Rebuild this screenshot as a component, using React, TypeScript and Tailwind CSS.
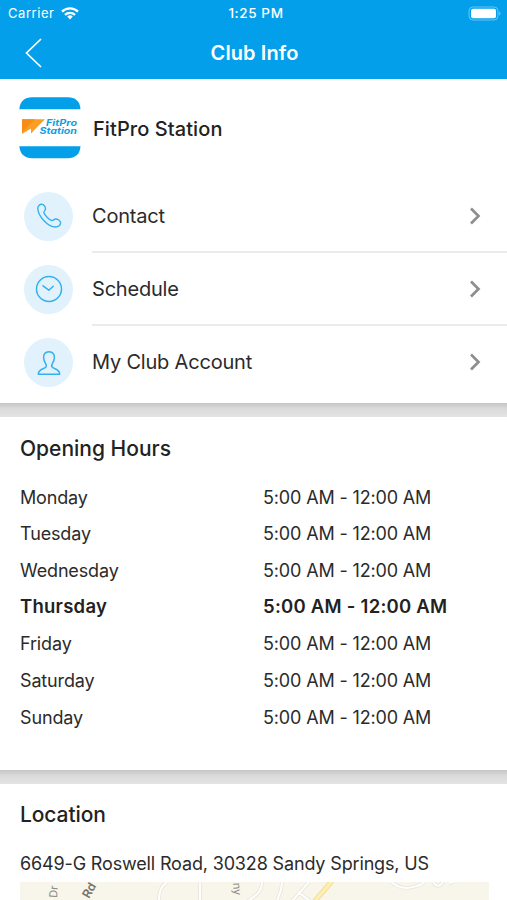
import type { ReactNode } from "react";

const PhoneIcon = () => (
  <svg width="26" height="26" viewBox="0 0 26 26" fill="none" stroke="#35b0ee" strokeWidth="1.4" strokeLinejoin="round">
    <path d="M1.800 5.200C1.800 3 3.700 1.300 5.600 1.300c2.400 0 4 2.600 3.900 4.600C9.400 7.700 7.400 8.300 8 9.900c.9 2.500 4.900 6.400 7.300 7.500 1.700.7 2.600-1.300 4.300-1.400 2-.1 4.800 1.500 5 3.600.2 2.400-2.300 4.400-5.100 4.400C11.800 24 1.800 12.800 1.800 5.200Z" />
  </svg>
);

const ClockIcon = () => (
  <svg width="28" height="28" viewBox="0 0 28 28" fill="none" stroke="#35b0ee" strokeWidth="1.5" strokeLinecap="round" strokeLinejoin="round">
    <circle cx="14" cy="14" r="12.500" />
    <path d="m8 10.800 5.800 4.400 4.500-3.900" />
  </svg>
);

const PersonIcon = () => (
  <svg width="26" height="26" viewBox="0 0 26 26" fill="none" stroke="#35b0ee" strokeWidth="1.5" strokeLinejoin="round">
    <path d="M13 1.700c-3.900 0-5.700 2.700-5.400 6.200.2 3 1.500 4.800 2.300 6.300.8 1.600.4 3-1 3.700-2.700 1.300-6.600 2-6.600 6.400h21.400c0-4.400-3.900-5.100-6.600-6.400-1.400-.7-1.800-2.100-1-3.700.8-1.500 2.100-3.300 2.300-6.300.3-3.500-1.500-6.200-5.400-6.200Z" />
  </svg>
);

function StatusBar() {
  return (
    <div className="grid grid-cols-3 items-center h-[27px] pl-2 pr-[6px] text-[13px]">
      <div className="flex items-center gap-[7px] tracking-[0.55px]">
        <span>Carrier</span>
        <svg width="18" height="13" viewBox="0 0 18 13" fill="none" stroke="white" strokeWidth="2.300">
          <path d="M1 4.700a11.500 11.500 0 0 1 16 0" />
          <path d="M4 7.900a7.200 7.200 0 0 1 10 0" />
          <path d="m9 12.500-2.800-3a4 4 0 0 1 5.600 0Z" fill="white" stroke="none" />
        </svg>
      </div>
      <span className="pl-[3px] text-center font-medium text-[13.500px] tracking-[0.6px] whitespace-nowrap">1:25 PM</span>
      <svg className="justify-self-end" width="33" height="15" viewBox="0 0 33 15">
        <rect x="1" y="1" width="29" height="13" rx="4" fill="none" stroke="white" strokeOpacity=".4" />
        <rect x="3" y="2.800" width="25" height="9.500" rx="2" fill="white" />
        <path d="M31.300 5.500c1.500.6 1.500 3.400 0 4Z" fill="white" fillOpacity=".5" />
      </svg>
    </div>
  );
}

function ClubLogo() {
  return (
    <svg width="62" height="62" viewBox="0 0 62 62">
      <path d="M.3 12.300C1 4 6 .3 13 .3h36c7 0 12 3.700 12.500 12Z" fill="#039fe9" />
      <path d="M.3 49.300C1 57.500 6 61.300 13 61.300h36c7 0 12-3.800 12.500-12Z" fill="#039fe9" />
      <path d="M3 22.300h23l-8 8-6 6.200v-5L3 37Z" fill="#fa9d24" />
      <path d="M3 22.300h13L3 35Z" fill="#f78c16" />
      <text x="27" y="28.800" fontSize="9" fontWeight="700" fontStyle="italic" textLength="31" lengthAdjust="spacingAndGlyphs" fill="#109fe0">FitPro</text>
      <text x="20.500" y="36.800" fontSize="9" fontWeight="700" fontStyle="italic" textLength="37.500" lengthAdjust="spacingAndGlyphs" fill="#109fe0">Station</text>
    </svg>
  );
}

function MenuRow({ icon, label, last }: { icon: ReactNode; label: string; last?: boolean }) {
  return (
    <div className="flex items-center pl-6">
      <div className="flex items-center justify-center size-[49px] rounded-full bg-[#e1f2fd] shrink-0">{icon}</div>
      <div className={`flex flex-1 items-center justify-between ml-[19px] pr-[26px] pt-px h-[73.300px] border-b-2 ${last ? "border-transparent" : "border-[#ebebeb]"}`}>
        <span className="text-[20px] tracking-[-0.2px]">{label}</span>
        <svg width="12" height="18" viewBox="0 0 12 18" fill="none" stroke="#8e8e8e" strokeWidth="2.700">
          <path d="m2 1.500 7.500 7.500L2 16.500" />
        </svg>
      </div>
    </div>
  );
}

const Divider = () => (
  <div className="h-[14px] bg-linear-to-b from-[#c5c5c5] via-[#dadada] via-40% to-[#e4e4e4]" />
);

const hours = [
  { day: "Monday", time: "5:00 AM - 12:00 AM" },
  { day: "Tuesday", time: "5:00 AM - 12:00 AM" },
  { day: "Wednesday", time: "5:00 AM - 12:00 AM" },
  { day: "Thursday", time: "5:00 AM - 12:00 AM", today: true },
  { day: "Friday", time: "5:00 AM - 12:00 AM" },
  { day: "Saturday", time: "5:00 AM - 12:00 AM" },
  { day: "Sunday", time: "5:00 AM - 12:00 AM" },
];

const roads =
  "M147 0c-6 4-8 9-8 19M180 0v19M242 0c0 9-5 13-14 19M262 0l-1 8-4 11M289 0l-17 19M278 10l12 9M371 0c8 6 14 7 22 5s9-3 11-5M413 0c3 5 7 5 10 0M429 1l5-1";

function LocationMap() {
  return (
    <svg className="block" width="469" height="19" viewBox="0 0 469 19">
      <rect width="469" height="19" fill="#f8f5eb" />
      <path d={roads} fill="none" stroke="#e4e2dc" strokeWidth="3.600" />
      <path d={roads} fill="none" stroke="#fffefb" strokeWidth="2.200" />
      <path d="M312 -1l-18 21" stroke="#eed697" strokeWidth="5" />
      <path d="M312 -1l-18 21" stroke="#ffefad" strokeWidth="3.500" />
      <text transform="translate(37 16) rotate(-86)" fontSize="11" fill="#8c8982">Dr</text>
      <text transform="translate(69 17) rotate(-60)" fontSize="12" fontWeight="600" fill="#77736d">Rd</text>
      <text transform="translate(213 1) rotate(86)" fontSize="11" fill="#8c8982">ny</text>
    </svg>
  );
}

export default function App() {
  return (
    <div className="w-full h-[900px] overflow-hidden bg-white text-[#2b2b2b] font-['Inter','Liberation_Sans',sans-serif]">
      <header className="h-[79px] bg-[#039fea] text-white">
        <StatusBar />
        <div className="grid grid-cols-[60px_1fr_60px] items-center h-[51px]">
          <svg className="ml-6" width="19" height="30" viewBox="0 0 19 30" fill="none" stroke="white" strokeWidth="1.700">
            <path d="M17 1 2.500 15 17 29" />
          </svg>
          <h1 className="pl-0.5 text-center text-[20px] font-semibold tracking-[0.1px]">Club Info</h1>
        </div>
      </header>

      <section className="h-[324px] pt-[18px]">
        <div className="flex items-center gap-3 pl-[19px] h-[62px] mb-[20.500px]">
          <ClubLogo />
          <h2 className="text-[20px] font-medium tracking-[0.08px] pt-px text-[#222]">FitPro Station</h2>
        </div>
        <MenuRow icon={<PhoneIcon />} label="Contact" />
        <MenuRow icon={<ClockIcon />} label="Schedule" />
        <MenuRow icon={<PersonIcon />} label="My Club Account" last />
      </section>

      <Divider />

      <section className="h-[353px] px-5 pt-4">
        <h2 className="text-[21px] leading-8 font-medium text-[#222] mb-[14px]">Opening Hours</h2>
        {hours.map(({ day, time, today }) => (
          <div
            key={day}
            className={`grid grid-cols-[243px_1fr] items-center h-[36.660px] ${today ? "text-[18.500px] font-semibold tracking-[0.250px] text-[#222]" : "text-[18px] tracking-[-0.15px]"}`}
          >
            <span>{day}</span>
            <span>{time}</span>
          </div>
        ))}
      </section>

      <Divider />

      <section className="px-5 pt-[15px]">
        <h2 className="text-[21px] leading-8 font-medium tracking-[-0.1px] text-[#222]">Location</h2>
        <p className="text-[18px] leading-8 tracking-[-0.15px] mt-[17px] mb-0.5 whitespace-nowrap">6649-G Roswell Road, 30328 Sandy Springs, US</p>
        <LocationMap />
      </section>
    </div>
  );
}
